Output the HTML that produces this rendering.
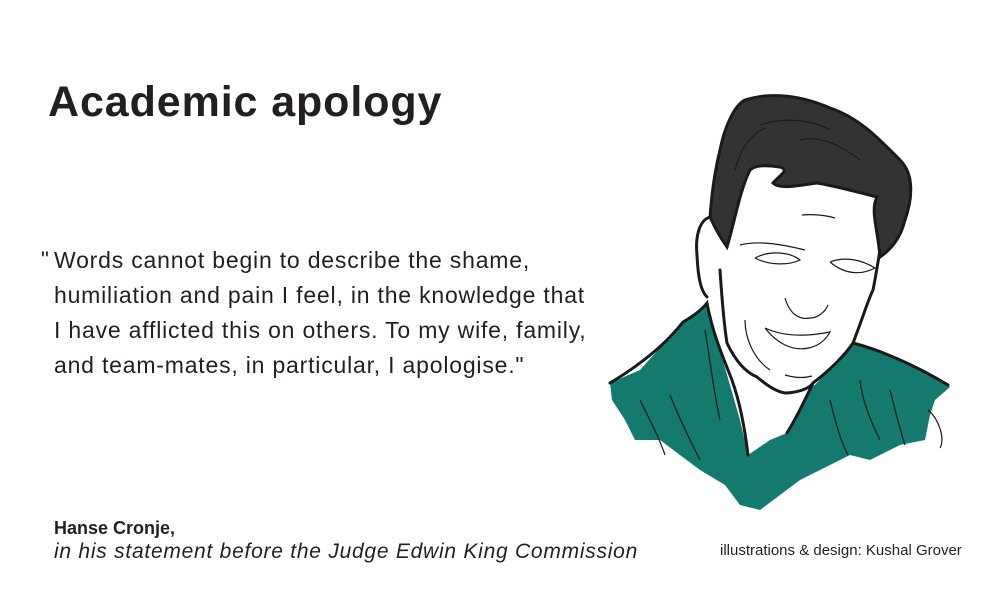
<!DOCTYPE html>
<html><head><meta charset="utf-8"><style>
html,body{margin:0;padding:0;background:#fff;}
body{width:1000px;height:606px;position:relative;overflow:hidden;font-family:"Liberation Sans",sans-serif;color:#231f20;}
.t{position:absolute;white-space:nowrap;}
#title{left:48px;top:78px;font-size:43px;font-weight:bold;letter-spacing:0.9px;}
.q{font-size:23px;left:54px;letter-spacing:0.8px;}
</style></head><body>
<div class="t" id="title">Academic apology</div>
<div class="t" style="left:41px;top:247px;font-size:22px;">"</div>
<div class="t q" style="top:247px;">Words cannot begin to describe the shame,</div>
<div class="t q" style="top:282px;">humiliation and pain I feel, in the knowledge that</div>
<div class="t q" style="top:317px;">I have afflicted this on others. To my wife, family,</div>
<div class="t q" style="top:352px;">and team-mates, in particular, I apologise."</div>
<div class="t" style="left:54px;top:518px;font-size:18px;font-weight:bold;">Hanse Cronje,</div>
<div class="t" style="left:54px;top:540px;font-size:21px;font-style:italic;letter-spacing:0.75px;">in his statement before the Judge Edwin King Commission</div>
<div class="t" style="left:720px;top:542px;font-size:15px;">illustrations &amp; design: Kushal Grover</div>
<svg style="position:absolute;left:0;top:0" width="1000" height="606" viewBox="0 0 1000 606">
<path d="M610,383 L640,370 L683,322 L707,305 L720,330 L745,375 L785,395 L815,385 L853,343 L880,352 L920,370 L950,387 L935,400 L930,415 L925,440 L900,445 L870,460 L850,455 L820,470 L800,480 L780,495 L760,510 L740,505 L725,485 L700,470 L680,455 L660,440 L635,440 L625,420 L612,400 Z" fill="#147a6e"/>
<path d="M707,305 L740,420 L748,455 L770,440 L787,433 L813,383 L785,395 L757,377 Z" fill="#fff"/>
<path d="M745,100 C770,92 800,95 830,108 C860,118 880,140 900,160 C915,175 912,200 905,220 C900,240 890,250 880,257 C878,230 870,210 877,197 C850,190 830,185 817,183 C800,185 780,190 773,183 C780,175 790,170 780,167 C765,165 755,165 750,170 C740,190 735,220 727,247 C722,240 715,228 710,217 C712,190 715,170 720,150 C725,125 735,105 745,100 Z" fill="#333" stroke="#1a1a1a" stroke-width="3"/>
<g fill="none" stroke="#1a1a1a" stroke-width="3" stroke-linecap="round">
<path d="M710,217 C700,220 695,235 697,255 C698,275 700,290 707,297"/>
<path d="M720,270 C722,300 724,325 727,343 C735,360 745,372 757,377 C770,388 780,393 787,393 C800,392 810,388 813,383 C830,370 845,355 853,343 C862,320 868,300 873,290 C876,275 878,262 880,250"/>
<path d="M610,383 C640,365 665,345 683,322 C690,318 700,312 707,303 C712,330 720,350 730,375 C740,400 745,430 748,455"/>
<path d="M787,433 C795,420 805,400 813,383"/>
<path d="M853,343 C880,350 915,365 948,385"/>
</g>
<g fill="none" stroke="#1a1a1a" stroke-width="1.2">
<path d="M740,245 C760,240 785,245 805,250"/><path d="M755,258 C770,250 790,252 800,260 C790,265 770,266 755,258"/>
<path d="M830,262 C845,256 862,260 875,268 C862,275 845,275 830,262"/><path d="M802,215 C812,214 825,215 835,218"/>
<path d="M785,298 C790,315 800,320 810,318 C818,318 825,312 828,305"/>
<path d="M765,328 C780,335 800,338 830,332 C820,350 800,352 785,345 C775,340 768,332 765,328"/>
<path d="M745,320 C745,340 755,360 770,370"/><path d="M785,375 C795,378 805,378 812,376"/>
<path d="M640,400 C650,420 660,440 665,455"/><path d="M670,395 C680,420 690,440 700,460"/>
<path d="M890,390 C895,410 900,430 905,445"/><path d="M860,380 C862,400 870,420 880,440"/>
<path d="M830,400 C835,420 840,440 848,455"/><path d="M705,330 C710,360 715,400 720,420"/>
<path d="M928,410 C940,420 945,440 940,448"/>
<path d="M760,125 C780,118 810,118 830,130"/><path d="M800,140 C820,135 840,145 860,160"/><path d="M735,170 C740,150 750,135 765,128"/>
</g>
</svg>
</body></html>
